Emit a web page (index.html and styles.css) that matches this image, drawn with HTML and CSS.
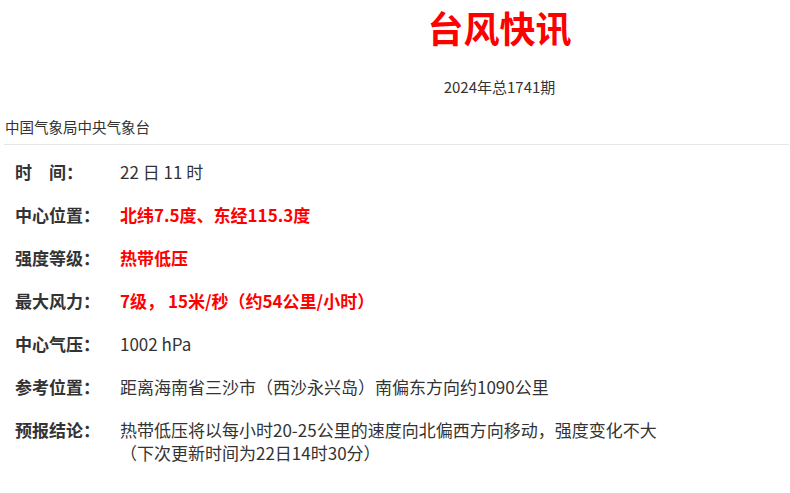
FILE: index.html
```html
<!DOCTYPE html>
<html lang="zh-CN">
<head>
<meta charset="utf-8">
<title>台风快讯</title>
<link rel="stylesheet" href="styles.css">
</head>
<body>
<div class="page">
  <header class="masthead">
    <h1 class="title">台风快讯</h1>
    <div class="issue">2024年总1741期</div>
  </header>
  <div class="org">中国气象局中央气象台</div>
  <div class="info">
    <div class="label">时&emsp;间：</div>
    <div class="value">22 日 11 时</div>
    <div class="label">中心位置：</div>
    <div class="value hot">北纬7.5度、东经115.3度</div>
    <div class="label">强度等级：</div>
    <div class="value hot">热带低压</div>
    <div class="label">最大风力：</div>
    <div class="value hot">7级， 15米/秒（约54公里/小时）</div>
    <div class="label">中心气压：</div>
    <div class="value">1002 hPa</div>
    <div class="label">参考位置：</div>
    <div class="value">距离海南省三沙市（西沙永兴岛）南偏东方向约1090公里</div>
    <div class="label">预报结论：</div>
    <div class="value multi">
      <div class="line">热带低压将以每小时20-25公里的速度向北偏西方向移动，强度变化不大</div>
      <div class="line">（下次更新时间为22日14时30分）</div>
    </div>
  </div>
</div>
</body>
</html>
```
FILE: styles.css
```css
html, body {
  margin: 0;
  padding: 0;
  background: #fff;
}
body {
  font-family: "Noto Sans CJK SC", "Noto Sans", sans-serif;
  color: #333;
}
.page {
  padding: 0 1px 0 4px;
}
.masthead {
  padding-left: 206px;
  text-align: center;
}
.title {
  margin: 0;
  padding-top: 4px;
  font-size: 36px;
  line-height: 46px;
  font-weight: 700;
  color: #ff0000;
}
.issue {
  margin-top: 27px;
  font-size: 15px;
  line-height: 20px;
  color: #333;
}
.org {
  margin-top: 20px;
  padding: 0 1px 7px;
  font-size: 14.5px;
  line-height: 20px;
  color: #333;
  border-bottom: 1px solid #e6e6e6;
}
.info {
  display: grid;
  grid-template-columns: 105px 1fr;
  row-gap: 21px;
  padding: 16px 0 0 11px;
  font-size: 17px;
  line-height: 22px;
}
.label {
  font-weight: 700;
  color: #333;
}
.value {
  color: #333;
}
.value.hot {
  color: #ff0000;
  font-weight: 700;
}
.value.multi {
  display: flex;
  flex-direction: column;
  gap: 1px;
}
```
